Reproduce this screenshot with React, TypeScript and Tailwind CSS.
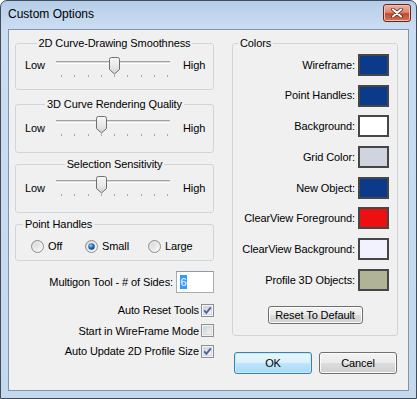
import React from "react";

const TICKS = Array.from({ length: 9 }, (_, i) => 8 + i * 13.25);

function Slider({ pos }: { pos: number }) {
  const cx = Math.round(TICKS[pos]) + 0.5;
  const l = cx - 5;
  const r = cx + 5;
  const d = `M${l} 2.5 Q${l} 0.5 ${l + 2} 0.5 L${r - 2} 0.5 Q${r} 0.5 ${r} 2.5 L${r} 12.5 L${cx} 17 L${l} 12.5 Z`;
  return (
    <svg width="120" height="21" viewBox="0 0 120 21" className="block shrink-0">
      <defs>
        <linearGradient id="thumbFill" x1="0" y1="0" x2="0" y2="1">
          <stop offset="0" stopColor="#f7f7f7" />
          <stop offset="0.6" stopColor="#e6e6e6" />
          <stop offset="1" stopColor="#cfcfcf" />
        </linearGradient>
      </defs>
      <rect x="3" y="4" width="114" height="1" fill="#a3a3a3" />
      <rect x="3" y="5" width="114" height="1" fill="#dadada" />
      <rect x="3" y="6" width="114" height="1" fill="#ffffff" />
      {TICKS.map((t, i) => (
        <rect key={i} x={Math.round(t)} y="18" width="1" height="2" fill="#a8a8a8" />
      ))}
      <path d={d} fill="url(#thumbFill)" stroke="#6f6f6f" />
    </svg>
  );
}

function Radio({ checked }: { checked?: boolean }) {
  return (
    <svg width="13" height="13" viewBox="0 0 13 13" className="block shrink-0">
      <defs>
        <linearGradient id="radioFill" x1="0" y1="0" x2="1" y2="1">
          <stop offset="0" stopColor="#cdcdcd" />
          <stop offset="1" stopColor="#ffffff" />
        </linearGradient>
        <radialGradient id="radioDot" cx="0.4" cy="0.35" r="0.7">
          <stop offset="0" stopColor="#9fdcff" />
          <stop offset="0.45" stopColor="#2a7cc4" />
          <stop offset="1" stopColor="#0b3566" />
        </radialGradient>
      </defs>
      <circle cx="6.5" cy="6.5" r="6" fill="url(#radioFill)" stroke="#8e8f8f" />
      <circle cx="6.5" cy="6.5" r="4.2" fill="none" stroke="#f2f2f2" strokeWidth="0.8" />
      {checked && <circle cx="6.5" cy="6.5" r="3.2" fill="url(#radioDot)" />}
    </svg>
  );
}

function Check({ checked }: { checked?: boolean }) {
  return (
    <svg width="13" height="13" viewBox="0 0 13 13" className="block shrink-0">
      <defs>
        <linearGradient id="checkFill" x1="0" y1="0" x2="1" y2="1">
          <stop offset="0" stopColor="#cbd1da" />
          <stop offset="1" stopColor="#f7f7f7" />
        </linearGradient>
      </defs>
      <rect x="0.5" y="0.5" width="12" height="12" fill="#f4f4f4" stroke="#8e8f8f" />
      <rect x="2.5" y="2.5" width="8" height="8" fill="url(#checkFill)" stroke="#d6d9de" />
      {checked && (
        <path d="M3.2 6.4 L5.4 8.9 L9.8 3.4" fill="none" stroke="#4a5ea3" strokeWidth="1.8" />
      )}
    </svg>
  );
}

function Group({
  title,
  left,
  className,
  children,
}: {
  title: string;
  left?: boolean;
  className?: string;
  children: React.ReactNode;
}) {
  return (
    <fieldset className={`border border-[#d0d5d9] rounded-[3px] ${className ?? ""}`}>
      <legend className={`${left ? "ml-[7px]" : "mx-auto"} px-[2px] leading-[14px]`}>{title}</legend>
      {children}
    </fieldset>
  );
}

function SliderGroup({
  title,
  pos,
  pt,
  pb,
  lowMt,
  className,
}: {
  title: string;
  pos: number;
  pt: string;
  pb: string;
  lowMt: string;
  className?: string;
}) {
  return (
    <Group title={title} className={className}>
      <div className={`flex items-start pl-[9px] ${pt} ${pb}`}>
        <span className={`w-[28px] leading-[14px] ${lowMt}`}>Low</span>
        <Slider pos={pos} />
        <span className={`ml-[10px] leading-[14px] ${lowMt}`}>High</span>
      </div>
    </Group>
  );
}

const colors: [string, string][] = [
  ["Wireframe:", "bg-[#0b3a8b]"],
  ["Point Handles:", "bg-[#0b3a8b]"],
  ["Background:", "bg-[#ffffff]"],
  ["Grid Color:", "bg-[#d0d4de]"],
  ["New Object:", "bg-[#0b3a8b]"],
  ["ClearView Foreground:", "bg-[#ee1010]"],
  ["ClearView Background:", "bg-[#f2f2ff]"],
  ["Profile 3D Objects:", "bg-[#b0b396]"],
];

const grayBtn =
  "border border-[#707070] rounded-[3px] bg-[linear-gradient(#f3f3f3,#ebebeb_50%,#dddddd_50%,#cfcfcf)] shadow-[inset_0_0_0_1px_#fbfbfb]";

export default function App() {
  return (
    <div className="w-[417px] h-[399px] flex flex-col border border-[#404c5a] rounded-t-[7px] bg-[linear-gradient(#b6cee9,#cbddf1_28px,#c4d8ee)] text-[11px] tracking-[-0.1px] text-black font-['Liberation_Sans',Arial,sans-serif] overflow-hidden">
      <div className="h-[28px] flex items-center justify-between pl-[7px] pr-[5px] shrink-0">
        <span className="text-[12px] leading-[16px] tracking-normal mt-[-2px]">Custom Options</span>
        <div className="w-[28px] h-[18px] mt-[-4px] flex items-center justify-center rounded-[3px] border border-[#6a2418] bg-[linear-gradient(#eab4a6,#d98a76_45%,#c4472e_55%,#d6735a)] shadow-[inset_0_0_0_1px_#f0c0b0]">
          <svg width="12" height="10" viewBox="0 0 12 10">
            <path d="M2 1.5 L10 8.5 M10 1.5 L2 8.5" stroke="#5a1a10" strokeWidth="3.6" strokeLinecap="round" />
            <path d="M2 1.5 L10 8.5 M10 1.5 L2 8.5" stroke="#ffffff" strokeWidth="2.2" strokeLinecap="round" />
          </svg>
        </div>
      </div>
      <div className="flex-1 px-[7px] pb-[7px] flex">
        <div className="flex-1 flex items-start border border-[#8194ad] bg-[#f0f0f0] pt-[6px] pl-[6px]">
          <div className="w-[199px] flex flex-col">
            <SliderGroup title="2D Curve-Drawing Smoothness" pos={4} pt="pt-[7px]" pb="pb-[11px]" lowMt="mt-[1px]" />
            <SliderGroup title="3D Curve Rendering Quality" pos={3} pt="pt-[5px]" pb="pb-[15px]" lowMt="mt-[5px]" className="mt-[7px]" />
            <SliderGroup title="Selection Sensitivity" pos={3} pt="pt-[5px]" pb="pb-[15px]" lowMt="mt-[5px]" className="mt-[4px]" />
            <Group title="Point Handles" left className="mt-[4px]">
              <div className="flex items-center pl-[15px] pt-[8px] pb-[7px]">
                <label className="w-[54px] flex items-center gap-[4px]">
                  <Radio />
                  <span className="leading-[14px]">Off</span>
                </label>
                <label className="w-[63px] flex items-center gap-[4px]">
                  <Radio checked />
                  <span className="leading-[14px]">Small</span>
                </label>
                <label className="flex items-center gap-[4px]">
                  <Radio />
                  <span className="leading-[14px]">Large</span>
                </label>
              </div>
            </Group>
            <div className="mt-[10px] flex items-center justify-end gap-[3px]">
              <span>Multigon Tool - # of Sides:</span>
              <div className="w-[38px] h-[22px] border border-[#a3adb8] border-t-[#8e98a6] bg-white flex items-center pl-[3px]">
                <span className="bg-[#3399ff] text-white leading-[14px] px-[0.5px]">6</span>
              </div>
            </div>
            <div className="mt-[7px] flex flex-col">
              {(
                [
                  ["Auto Reset Tools", true],
                  ["Start in WireFrame Mode", false],
                  ["Auto Update 2D Profile Size", true],
                ] as [string, boolean][]
              ).map(([t, c]) => (
                <div key={t} className="h-[20.5px] flex items-center justify-end gap-[2px]">
                  <span>{t}</span>
                  <Check checked={c} />
                </div>
              ))}
            </div>
          </div>
          <div className="ml-[18px] w-[166px] flex flex-col">
            <Group title="Colors" left className="[&>legend]:ml-[5px]">
              <div className="flex flex-col gap-[8.7px] pt-[4px] pr-[8px]">
                {colors.map(([label, bg]) => (
                  <div key={label} className="flex items-center justify-end gap-[3px] h-[22px]">
                    <span>{label}</span>
                    <div className={`w-[31px] h-[22px] border-2 border-[#464646] ${bg}`} />
                  </div>
                ))}
              </div>
              <div className="flex justify-center mt-[15px] pb-[11px]">
                <button className={`w-[95px] h-[18px] leading-[14px] ${grayBtn}`}>Reset To Default</button>
              </div>
            </Group>
            <div className="mt-[16px] flex gap-[7px] pl-[2px]">
              <button className="w-[78px] h-[22px] rounded-[3px] border border-[#3c7fb1] bg-[linear-gradient(#eaf6fd,#d9f0fc_50%,#bee6fd_50%,#a7d9f5)] shadow-[inset_0_0_0_1px_#c6ecfc]">
                OK
              </button>
              <button className={`w-[78px] h-[22px] ${grayBtn}`}>Cancel</button>
            </div>
          </div>
        </div>
      </div>
    </div>
  );
}
